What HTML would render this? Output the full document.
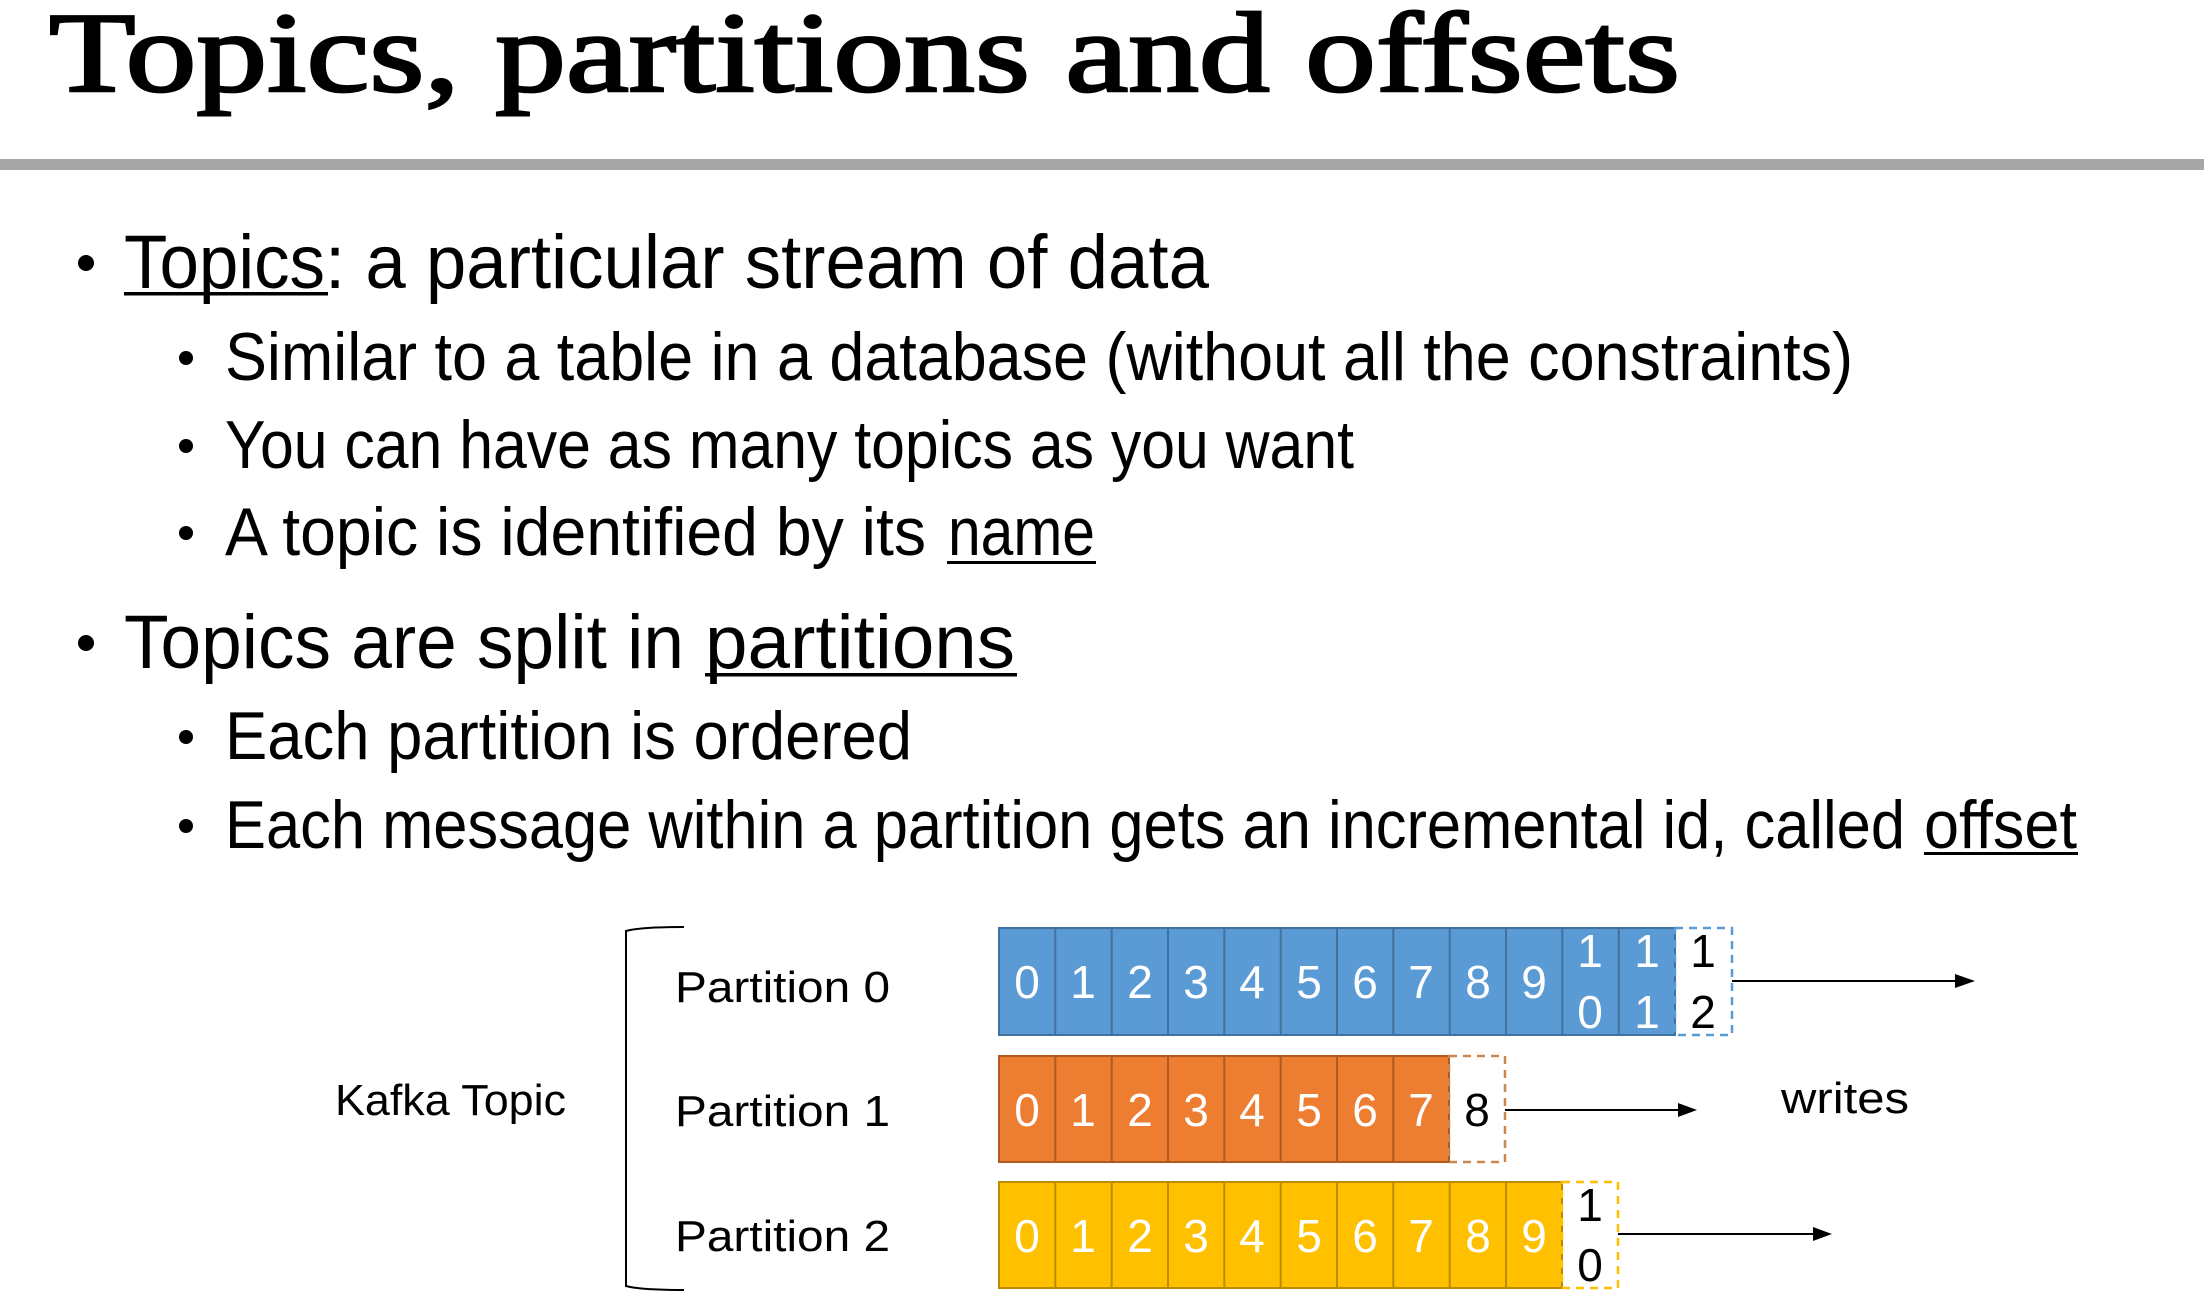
<!DOCTYPE html>
<html><head><meta charset="utf-8"><style>
html,body{margin:0;padding:0;background:#fff;}
svg{display:block;}
</style></head><body>
<svg width="2204" height="1310" viewBox="0 0 2204 1310" xmlns="http://www.w3.org/2000/svg">
<rect width="2204" height="1310" fill="#fff"/>
<!-- title -->
<text x="49" y="91" font-family="Liberation Serif, serif" font-size="114" stroke="#000" stroke-width="2.5" textLength="1631" lengthAdjust="spacingAndGlyphs">Topics, partitions and offsets</text>
<rect x="0" y="159" width="2204" height="11" fill="#a6a6a6"/>

<g font-family="Liberation Sans, sans-serif" fill="#000">
<circle cx="86" cy="263" r="8"/>
<text x="124" y="288" font-size="76" textLength="201" lengthAdjust="spacingAndGlyphs">Topics</text>
<rect x="124" y="292" width="204" height="3.5"/>
<text x="325" y="288" font-size="76" textLength="884" lengthAdjust="spacingAndGlyphs">: a particular stream of data</text>

<circle cx="186" cy="358" r="7"/>
<text x="225" y="380" font-size="68" textLength="1628" lengthAdjust="spacingAndGlyphs">Similar to a table in a database (without all the constraints)</text>
<circle cx="186" cy="446" r="7"/>
<text x="225" y="468" font-size="68" textLength="1129" lengthAdjust="spacingAndGlyphs">You can have as many topics as you want</text>
<circle cx="186" cy="533" r="7"/>
<text x="225" y="555" font-size="68" textLength="701" lengthAdjust="spacingAndGlyphs">A topic is identified by its</text>
<text x="948" y="555" font-size="68" textLength="147" lengthAdjust="spacingAndGlyphs">name</text>
<rect x="947" y="561" width="149" height="3"/>

<circle cx="86" cy="643" r="8"/>
<text x="124" y="668" font-size="76" textLength="560" lengthAdjust="spacingAndGlyphs">Topics are split in</text>
<text x="705" y="668" font-size="76" textLength="310" lengthAdjust="spacingAndGlyphs">partitions</text>
<rect x="705" y="673" width="312" height="3.5"/>

<circle cx="186" cy="737" r="7"/>
<text x="225" y="759" font-size="68" textLength="687" lengthAdjust="spacingAndGlyphs">Each partition is ordered</text>
<circle cx="186" cy="826" r="7"/>
<text x="225" y="848" font-size="68" textLength="1680" lengthAdjust="spacingAndGlyphs">Each message within a partition gets an incremental id, called</text>
<text x="1924" y="848" font-size="68" textLength="153" lengthAdjust="spacingAndGlyphs">offset</text>
<rect x="1924" y="852" width="154" height="3"/>

<!-- diagram labels -->
<text x="335" y="1115" font-size="44" textLength="231" lengthAdjust="spacingAndGlyphs">Kafka Topic</text>
<text x="675" y="1002" font-size="44" textLength="215" lengthAdjust="spacingAndGlyphs">Partition 0</text>
<text x="675" y="1126" font-size="44" textLength="215" lengthAdjust="spacingAndGlyphs">Partition 1</text>
<text x="675" y="1251" font-size="44" textLength="215" lengthAdjust="spacingAndGlyphs">Partition 2</text>
<text x="1781" y="1113" font-size="44" textLength="128" lengthAdjust="spacingAndGlyphs">writes</text>
</g>

<!-- bracket -->
<path d="M684,927 Q640,927 626,931 L626,1286 Q640,1290 684,1290" fill="none" stroke="#000" stroke-width="2"/>

<!-- blue row -->
<g stroke="#41719c" stroke-width="2" fill="#5b9bd5">
<rect x="999" y="928" width="676" height="107"/>
<path d="M1055.3,928V1035M1111.7,928V1035M1168,928V1035M1224.3,928V1035M1280.7,928V1035M1337,928V1035M1393.3,928V1035M1449.7,928V1035M1506,928V1035M1562.3,928V1035M1618.7,928V1035" fill="none"/>
</g>
<rect x="1675" y="928" width="57" height="107" fill="none" stroke="#5b9bd5" stroke-width="2.5" stroke-dasharray="8,6"/>
<g font-family="Liberation Sans, sans-serif" font-size="46" fill="#fff" text-anchor="middle">
<text x="1027" y="998">0</text><text x="1083" y="998">1</text><text x="1140" y="998">2</text><text x="1196" y="998">3</text><text x="1252" y="998">4</text><text x="1309" y="998">5</text><text x="1365" y="998">6</text><text x="1421" y="998">7</text><text x="1478" y="998">8</text><text x="1534" y="998">9</text>
<text x="1590" y="967">1</text><text x="1590" y="1028">0</text>
<text x="1647" y="967">1</text><text x="1647" y="1028">1</text>
<text x="1703" y="967" fill="#000">1</text><text x="1703" y="1028" fill="#000">2</text>
</g>
<line x1="1732" y1="981" x2="1972" y2="981" stroke="#000" stroke-width="2"/>
<path d="M1955,974 L1975,981 L1955,988 Z"/>

<!-- orange row -->
<g stroke="#ae5a21" stroke-width="2" fill="#ed7d31">
<rect x="999" y="1056" width="450" height="106"/>
<path d="M1055.3,1056V1162M1111.7,1056V1162M1168,1056V1162M1224.3,1056V1162M1280.7,1056V1162M1337,1056V1162M1393.3,1056V1162" fill="none"/>
</g>
<rect x="1449" y="1056" width="56" height="106" fill="none" stroke="#c9874f" stroke-width="2.5" stroke-dasharray="8,6"/>
<g font-family="Liberation Sans, sans-serif" font-size="46" fill="#fff" text-anchor="middle">
<text x="1027" y="1126">0</text><text x="1083" y="1126">1</text><text x="1140" y="1126">2</text><text x="1196" y="1126">3</text><text x="1252" y="1126">4</text><text x="1309" y="1126">5</text><text x="1365" y="1126">6</text><text x="1421" y="1126">7</text>
<text x="1477" y="1126" fill="#000">8</text>
</g>
<line x1="1505" y1="1110" x2="1694" y2="1110" stroke="#000" stroke-width="2"/>
<path d="M1678,1103 L1697,1110 L1678,1117 Z"/>

<!-- yellow row -->
<g stroke="#bc8c00" stroke-width="2" fill="#ffc000">
<rect x="999" y="1182" width="563" height="106"/>
<path d="M1055.3,1182V1288M1111.7,1182V1288M1168,1182V1288M1224.3,1182V1288M1280.7,1182V1288M1337,1182V1288M1393.3,1182V1288M1449.7,1182V1288M1506,1182V1288" fill="none"/>
</g>
<rect x="1562" y="1182" width="56" height="106" fill="none" stroke="#ffc000" stroke-width="2.5" stroke-dasharray="8,6"/>
<g font-family="Liberation Sans, sans-serif" font-size="46" fill="#fff" text-anchor="middle">
<text x="1027" y="1252">0</text><text x="1083" y="1252">1</text><text x="1140" y="1252">2</text><text x="1196" y="1252">3</text><text x="1252" y="1252">4</text><text x="1309" y="1252">5</text><text x="1365" y="1252">6</text><text x="1421" y="1252">7</text><text x="1478" y="1252">8</text><text x="1534" y="1252">9</text>
<text x="1590" y="1221" fill="#000">1</text><text x="1590" y="1281" fill="#000">0</text>
</g>
<line x1="1618" y1="1234" x2="1829" y2="1234" stroke="#000" stroke-width="2"/>
<path d="M1813,1227 L1832,1234 L1813,1241 Z"/>
</svg>
</body></html>
